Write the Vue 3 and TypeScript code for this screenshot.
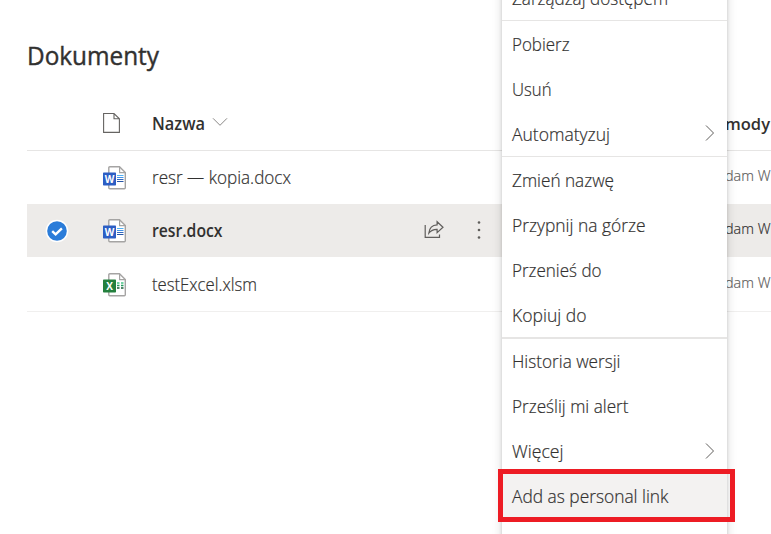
<script setup lang="ts">
interface FileRow { name: string; kind: 'word' | 'excel'; selected: boolean; width: number }
interface MenuItem { label: string; width: number; sub?: boolean; active?: boolean }

const files: FileRow[] = [
  { name: 'resr — kopia.docx', kind: 'word', selected: false, width: 139 },
  { name: 'resr.docx', kind: 'word', selected: true, width: 70.5 },
  { name: 'testExcel.xlsm', kind: 'excel', selected: false, width: 105 },
]

const groups: MenuItem[][] = [
  [{ label: 'Zarządzaj dostępem', width: 156 }],
  [
    { label: 'Pobierz', width: 57.5 },
    { label: 'Usuń', width: 39.5 },
    { label: 'Automatyzuj', width: 98, sub: true },
  ],
  [
    { label: 'Zmień nazwę', width: 102 },
    { label: 'Przypnij na górze', width: 133.5 },
    { label: 'Przenieś do', width: 89.5 },
    { label: 'Kopiuj do', width: 74.5 },
  ],
  [
    { label: 'Historia wersji', width: 108.5 },
    { label: 'Prześlij mi alert', width: 116.5 },
    { label: 'Więcej', width: 51.5, sub: true },
    { label: 'Add as personal link', width: 156.5, active: true },
  ],
]
</script>

<template>
  <div class="page">
    <h1><svg class="title" width="140" height="40"><text x="0" y="30" textLength="132" lengthAdjust="spacingAndGlyphs">Dokumenty</text></svg></h1>

    <div class="list">
      <div class="row head">
        <div class="check"></div>
        <div class="icon">
          <svg class="page-icon" width="18" height="22" viewBox="0 0 18 22" fill="none" stroke="#666462" stroke-width="1.1">
            <path d="M.6 1.5H11L16.4 6.8V20.4H.6ZM11 1.5V6.8H16.4" />
          </svg>
        </div>
        <div class="name">
          <svg class="text semi" width="54" height="30"><text x="0" y="21" textLength="53" lengthAdjust="spacingAndGlyphs">Nazwa</text></svg>
          <svg class="chevron" width="16" height="10" viewBox="0 0 16 10" fill="none" stroke="#8a8886"><path d="M1 1.3 8 8.3 15 1.3" /></svg>
        </div>
        <div class="author">
          <svg class="semi" width="46" height="24"><text x="0" y="18" textLength="45" lengthAdjust="spacingAndGlyphs">mody</text></svg>
        </div>
      </div>

      <div v-for="file in files" :key="file.name" class="row" :class="{ selected: file.selected }">
        <div class="check">
          <svg v-if="file.selected" width="24" height="24" viewBox="0 0 24 24">
            <circle cx="12" cy="12" r="11.3" fill="#fff" />
            <circle cx="12" cy="12" r="9.8" fill="#2b7cd9" />
            <path d="M7.2 12.2 10.6 15.4 16.9 9.4" fill="none" stroke="#fff" stroke-width="2.4" />
          </svg>
        </div>
        <div class="icon">
          <svg width="24" height="24" viewBox="0 0 24 24">
            <path d="M6.8.8H16.5L22.3 6.6V21.7Q22.3 22.7 21.3 22.7H6.8Q5.8 22.7 5.8 21.7V1.8Q5.8.8 6.8.8Z" fill="#fff" stroke="#a5a4a3" stroke-width="1.4" />
            <path d="M16.6 1V6.6H22.2" fill="none" stroke="#a5a4a3" stroke-width="1.2" />
            <template v-if="file.kind === 'word'">
              <path d="M14 9.5H20.5" stroke="#52b1f5" />
              <path d="M14 11.5H20.5" stroke="#4192e8" />
              <path d="M14 13.5H20.5" stroke="#3267bd" />
              <path d="M14 15.5H20.5" stroke="#2755a7" />
              <rect x="0" y="6.5" width="13" height="13" rx=".7" fill="#2c5ec4" />
              <text class="letter" x="6.5" y="16.7" text-anchor="middle" textLength="9.6" lengthAdjust="spacingAndGlyphs">W</text>
            </template>
            <template v-else>
              <path d="M14 10H16.5M18 10H20.5" stroke="#46c586" stroke-width="1.4" />
              <path d="M14 12.5H16.5M18 12.5H20.5" stroke="#279b61" stroke-width="1.4" />
              <path d="M14 15H16.5M18 15H20.5" stroke="#185c37" stroke-width="1.4" />
              <rect x="0" y="6.5" width="13" height="13" rx=".7" fill="#24803e" />
              <text class="letter" x="6.5" y="16.7" text-anchor="middle">X</text>
            </template>
          </svg>
        </div>
        <div class="name">
          <svg class="text" :class="{ semi: file.selected }" width="150" height="30"><text x="0" y="21" :textLength="file.width" lengthAdjust="spacingAndGlyphs">{{ file.name }}</text></svg>
        </div>
        <div class="actions">
          <template v-if="file.selected">
            <svg width="22" height="20" viewBox="0 0 22 20" fill="none" stroke="#605e5c" stroke-width="1.2">
              <path d="M2.2 5V17.3H16.5V14.5" />
              <path d="M5.8 13.2C6.3 8.4 9.5 5.1 14.1 4.9V1.7L20 7.2 14.1 12.7V9.4C10.7 9.3 8 10.4 5.8 13.2Z" />
            </svg>
            <svg class="dots" width="4" height="20" viewBox="0 0 4 20" fill="#605e5c">
              <circle cx="2" cy="2.5" r="1.3" /><circle cx="2" cy="10" r="1.3" /><circle cx="2" cy="17.5" r="1.3" />
            </svg>
          </template>
        </div>
        <div class="author">
          <svg width="46" height="24"><text x="0" y="17" textLength="45.5" lengthAdjust="spacingAndGlyphs">dam W</text></svg>
        </div>
      </div>
    </div>

    <div class="menu">
      <div v-for="(group, g) in groups" :key="g" class="group">
        <div v-for="item in group" :key="item.label" class="item" :class="{ active: item.active }">
          <svg class="text" width="175" height="30"><text x="0" y="21" :textLength="item.width" lengthAdjust="spacingAndGlyphs">{{ item.label }}</text></svg>
          <svg v-if="item.sub" class="arrow" width="10" height="18" viewBox="0 0 10 18" fill="none" stroke="#605e5c"><path d="M1 1.5 8.5 9 1 16.5" /></svg>
        </div>
      </div>
    </div>
    <div class="highlight"></div>
  </div>
</template>

<style>
body { overflow: hidden; background: #fff; }
</style>

<style scoped>
* { box-sizing: border-box; }
.page { position: relative; width: 771px; height: 534px; overflow: hidden; padding-left: 27px; background: #fff; color: #323130; font: 300 17.5px/24px "Open Sans", "Noto Sans", sans-serif; }
svg { display: block; flex: none; overflow: visible; }
text { fill: #323130; stroke: #323130; stroke-width: .2px; }
h1 { margin: 0; padding: 35px 0 0; height: 97px; }
.title { font-size: 25px; font-weight: 400; }
.title text { stroke-width: .4px; }
.text { font-size: 17.5px; font-weight: 300; }
.semi, .text.semi { font-weight: 600; }
.semi text { stroke: none; }
.letter { font-size: 10px; font-weight: 700; fill: #fff; stroke: none; }
.row { display: grid; grid-template-columns: 76px 49px 260px 314px 46px; align-items: center; height: 53px; }
.row.head { height: 54px; border-bottom: 1px solid #e6e5e4; }
.row:last-child { height: 55px; padding-top: 1px; border-bottom: 1px solid #f0efee; }
.row.selected { background: #edebe9; }
.check { padding-left: 18px; }
.page-icon { margin-top: -2px; }
.name { display: flex; align-items: center; }
.chevron { margin: -3px 0 0 6px; }
.actions { display: flex; align-items: center; padding-left: 11px; margin-top: -2px; }
.dots { margin-left: 32px; }
.author { grid-column: 5; font-size: 14.5px; margin-top: -4px; margin-left: -1px; }
.author text { fill: #605e5c; stroke: #605e5c; }
.selected .author text { fill: #323130; stroke: #323130; }
.head .author { margin-top: 0; font-size: 17px; }
.head .author text { fill: #323130; stroke: none; }
.menu { position: absolute; left: 502px; top: -25px; width: 225px; height: 580px; background: #fff; box-shadow: 0 3px 10px rgba(0, 0, 0, .15), 0 0 3px rgba(0, 0, 0, .16); }
.group + .group { border-top: 1px solid #e6e5e4; }
.group + .group + .group + .group { border-top-width: 2px; }
.item { display: flex; align-items: center; justify-content: space-between; height: 45px; padding: 2px 12px 0 10px; }
.group:last-child .item { padding-top: 0; }
.group:last-child .arrow { margin-top: -1px; }
.arrow { margin-top: -3px; }
.active { background: #f3f2f1; }
.highlight { position: absolute; left: 498px; top: 469px; width: 237px; height: 53px; border: 5px solid #ed1c24; }
</style>
